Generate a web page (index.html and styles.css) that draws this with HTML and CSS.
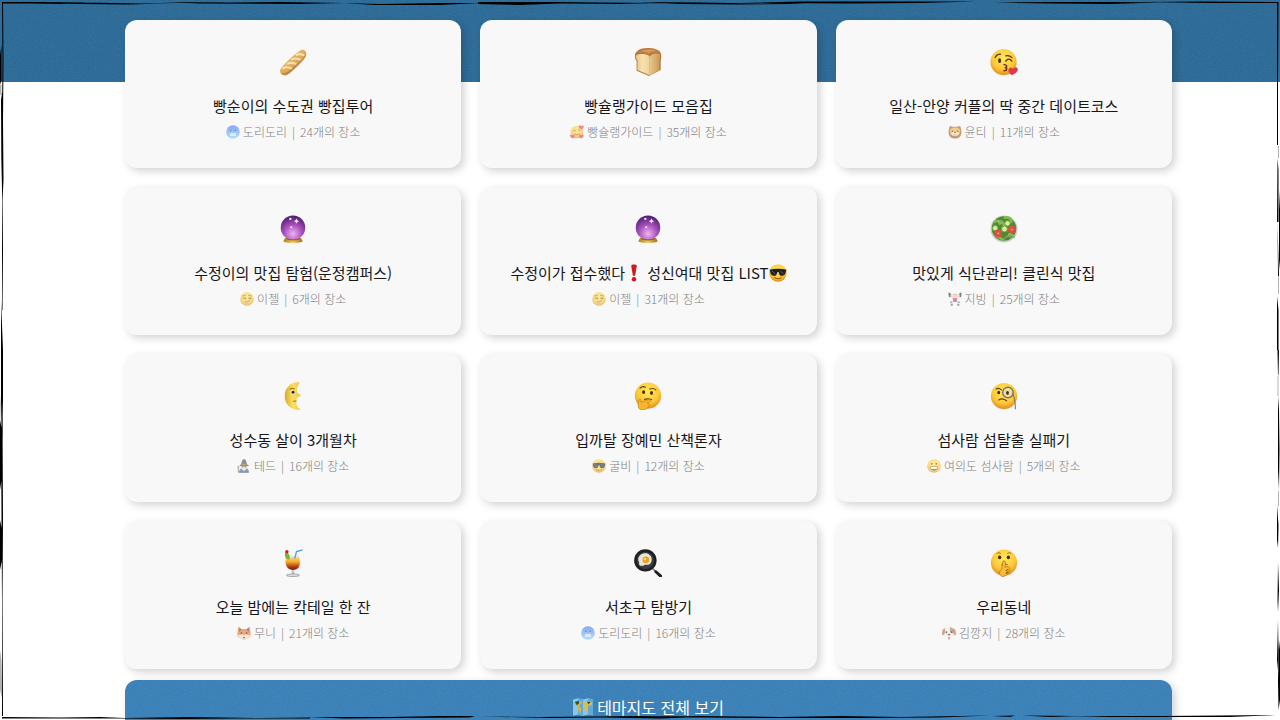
FILE: index.html
```
<!DOCTYPE html>
<html lang="ko">
<head>
    <meta charset="UTF-8">
    <meta name="viewport" content="width=device-width, initial-scale=1.0">
    <title>테마지도</title>
    <link rel="stylesheet" href="styles.css">
</head>
<body>
    <!-- 아이콘 모음 -->
    <svg class="sprite" aria-hidden="true">
        <defs>
            <radialGradient id="gFace" cx="50%" cy="35%" r="65%">
                <stop offset="0" stop-color="#ffe95c"/>
                <stop offset=".65" stop-color="#fdc93a"/>
                <stop offset="1" stop-color="#e38b1c"/>
            </radialGradient>
            <linearGradient id="gCold" x1="0" y1="0" x2="0" y2="1">
                <stop offset="0" stop-color="#3f74ee"/>
                <stop offset="1" stop-color="#7fd0ff"/>
            </linearGradient>
            <radialGradient id="gBall" cx="50%" cy="75%" r="75%">
                <stop offset="0" stop-color="#efb4ee"/>
                <stop offset=".5" stop-color="#a64fbb"/>
                <stop offset="1" stop-color="#4c1a6b"/>
            </radialGradient>
            <linearGradient id="gGold" x1="0" y1="0" x2="1" y2="0">
                <stop offset="0" stop-color="#b47a16"/>
                <stop offset=".5" stop-color="#ecc75c"/>
                <stop offset="1" stop-color="#a36c12"/>
            </linearGradient>
            <linearGradient id="gCrust" x1="0" y1="0" x2="1" y2="1">
                <stop offset="0" stop-color="#f3cf86"/>
                <stop offset=".6" stop-color="#dba558"/>
                <stop offset="1" stop-color="#a86322"/>
            </linearGradient>
            <linearGradient id="gLoaf" x1="0" y1="0" x2="1" y2="0">
                <stop offset="0" stop-color="#e5c689"/>
                <stop offset=".5" stop-color="#f6e3b2"/>
                <stop offset="1" stop-color="#ecd297"/>
            </linearGradient>
            <linearGradient id="gLoafSide" x1="0" y1="0" x2="1" y2="0">
                <stop offset="0" stop-color="#e6c88b"/>
                <stop offset="1" stop-color="#c6995a"/>
            </linearGradient>
            <linearGradient id="gDrink" x1="0" y1="0" x2="0" y2="1">
                <stop offset="0" stop-color="#ffe07a"/>
                <stop offset=".4" stop-color="#f5a524"/>
                <stop offset=".75" stop-color="#b23d12"/>
                <stop offset="1" stop-color="#6e170b"/>
            </linearGradient>
            <linearGradient id="gMoon" x1="0" y1="0" x2="1" y2="0">
                <stop offset="0" stop-color="#d9a82c"/>
                <stop offset=".5" stop-color="#fbdf62"/>
                <stop offset="1" stop-color="#f0c545"/>
            </linearGradient>
        </defs>

        <symbol id="baguette" viewBox="0 0 32 32">
            <path d="M1 26C1 22 22 3 26 2c3-.7 6 2 5 6C30 12 12 30 8 31c-4 .6-7-1.500-7-5z" fill="url(#gCrust)"/>
            <path d="M2 28c3 2 8 0 12-4S30 11 31 6c.6 4-2 7-6 11S12 30 8 31c-3 .5-5-1-6-3z" fill="#a8662a" opacity=".5"/>
            <path d="M5 23c3-2 6-1 9 0M10 18c3-2 6-1 9 0M15 13c3-2 6-1 9 0M20 8c3-2 5-1 8 0" stroke="#ffedba" stroke-width="2.400" fill="none" stroke-linecap="round" opacity=".8"/>
        </symbol>
        <symbol id="bread" viewBox="0 0 32 32">
            <path d="M1 9C1 4 7 0 15 0s15 2 16 7c.5 3 0 5-.5 8v10L17 32 3 26V15C2 13 1 12 1 9z" fill="#b87a3c"/>
            <path d="M2 9c1-3 14-3 16 1v21L4 25V14c-1-1-2-3-2-5z" fill="url(#gLoaf)"/>
            <path d="M18 10c3-4 11-5 12-2 0 3-1 5-1 8v9l-11 6z" fill="url(#gLoafSide)"/>
            <path d="M3 6c4-5 23-6 27 1-5-2-10-1-12 2C14 5 7 5 3 6z" fill="#be7d3e"/>
            <path d="M7 4c6-3 15-3 20 0-5-1-8 0-10 2-3-2-7-2-10-2z" fill="#d79b58"/>
        </symbol>
        <symbol id="kiss" viewBox="0 0 32 32">
            <circle cx="15.500" cy="16" r="15" fill="url(#gFace)"/>
            <ellipse cx="11" cy="14.500" rx="1.700" ry="2.700" fill="#4b2a0a"/>
            <path d="M6 11c1-3 3-4 6-4M18 9c3-1 5 0 7 2M18 15c2-3 5-3 7 0" stroke="#5b3509" stroke-width="1.500" fill="none" stroke-linecap="round"/>
            <path d="M16 19c4 0 4 3 1 3.500 3 .5 3 3.500-1 3.500" stroke="#6a2d0b" stroke-width="1.500" fill="none" stroke-linecap="round"/>
            <path d="M25 31c-4-2-5-6-3-8 2-1.500 4 0 4 1 1-1.500 4-3 5.500-1 1.500 3-2 6-6.500 8z" fill="#e33a4a"/>
        </symbol>
        <symbol id="crystal" viewBox="0 0 32 32">
            <path d="M7 26h18l2 4c-2 2.500-20 2.500-22 0z" fill="url(#gGold)"/>
            <circle cx="16" cy="14.500" r="14" fill="url(#gBall)"/>
            <path d="M8 27c4 2 12 2 16 0" stroke="#7d5110" fill="none"/>
            <path d="M20 4l1 2 2 1-2 1-1 2-1-2-2-1 2-1z" fill="#fff" opacity=".9"/>
            <circle cx="13" cy="4.500" r="1.300" fill="#fff"/>
            <circle cx="14" cy="14" r="1.200" fill="#fff" opacity=".9"/>
        </symbol>
        <symbol id="salad" viewBox="0 0 32 32">
            <circle cx="16" cy="16" r="15.500" fill="#c9ccd0"/>
            <circle cx="16" cy="15.500" r="14" fill="#4e8a34"/>
            <path d="M5 8c4-3 6-1 6 2M17 3c5-1 8 2 7 5M7 24c3 0 4 3 8 4M22 22c3 0 5 2 5 3M13 9c3 0 4 2 3 4" stroke="#7fbd4c" stroke-width="3" fill="none" stroke-linecap="round"/>
            <path d="M9 9c1-3 5-3 6-1M17 27c1-4 6-4 7-1" stroke="#c9b5b4" fill="none"/>
            <g fill="#d9efa0" stroke="#6fa33a"><circle cx="6" cy="15" r="3"/><circle cx="16.500" cy="16" r="3.300"/><circle cx="20" cy="9.500" r="3"/></g>
            <g fill="#d8523c"><circle cx="9.500" cy="21" r="4.400"/><circle cx="25" cy="16.500" r="4.400"/></g>
            <circle cx="9.500" cy="21" r="1.200" fill="#f0927a"/><circle cx="25" cy="16.500" r="1.200" fill="#f0927a"/>
        </symbol>
        <symbol id="moon" viewBox="0 0 32 32">
            <path d="M24 .5C14-1 6.500 6 6.500 16S14 33 25 31.500c-4-2-5.500-5-5-9l-.5-1.500 1-1-1-1c1 0 2-1 1.500-2l3-.5c1 0 1-1 .5-1.500l-3.500-3C20 8 21 4 24 .5z" fill="url(#gMoon)"/>
            <ellipse cx="15.500" cy="11.500" rx="2.400" ry="2" fill="#fff"/><circle cx="16" cy="11.700" r="1.700" fill="#1d2740"/>
            <path d="M12 8.500c2-1.500 4-1.500 6-.5M16 21.500c1 .7 2 .7 4 0" stroke="#a8781a" stroke-width="1.200" fill="none"/>
        </symbol>
        <symbol id="thinking" viewBox="0 0 32 32">
            <circle cx="16" cy="15.500" r="15" fill="url(#gFace)"/>
            <g fill="#4b2a0a"><ellipse cx="11" cy="11.500" rx="1.700" ry="2.200"/><ellipse cx="20" cy="12.500" rx="1.700" ry="2.200"/></g>
            <path d="M7 7c2-2 4-2 6-1M18 8c3-1 5-1 7 1M12 20c2-1 4-1 8 0" stroke="#6a3f0c" stroke-width="1.400" fill="none" stroke-linecap="round"/>
            <path d="M6 20c1-1 2 0 2 3l9-3c3-.5 3 2 1 2.500L15 24c3 0 3 4 1 5-2 2-5 3.500-8 3-4-1-4-9-2-12z" fill="#f7b52f" stroke="#c67a14" stroke-width=".8"/>
        </symbol>
        <symbol id="monocle" viewBox="0 0 32 32">
            <circle cx="16" cy="16" r="15" fill="url(#gFace)"/>
            <circle cx="20.500" cy="12" r="6" fill="#f2dfa0" stroke="#77736a" stroke-width="1.600"/>
            <g fill="#4b2a0a"><ellipse cx="10" cy="12" rx="1.600" ry="2.100"/><ellipse cx="20" cy="12.500" rx="1.600" ry="2.100"/></g>
            <path d="M7 8c2-1 4-1 6 1M10 20.500c3-2 7-1 9 1" stroke="#6a3f0c" stroke-width="1.400" fill="none" stroke-linecap="round"/>
            <path d="M26 13c2 5 3 10 3 18" stroke="#77736a" stroke-width="1.200" fill="none"/>
        </symbol>
        <symbol id="cocktail" viewBox="0 0 32 32">
            <path d="M8 7h15c3 9 2 16-7 17C6 23 6 15 8 7z" fill="#e9ecec"/>
            <path d="M8 9h15c2 8 1 14-7 15-9-1-9-8-8-15z" fill="url(#gDrink)"/>
            <path d="M18 11l2-8 7-2" stroke="#4ba3dd" stroke-width="1.500" fill="none"/>
            <path d="M7 4c4 0 6 3 5 8-4 0-6-3-5-8z" fill="#7cb335"/>
            <circle cx="9" cy="3" r="2" fill="#c81f2d"/>
            <path d="M15 24h2l1 5h-4z" fill="#bfc3c4"/>
            <ellipse cx="16" cy="30" rx="7.500" ry="1.500" fill="#ddd" stroke="#8a8c8c" stroke-width=".8"/>
        </symbol>
        <symbol id="pan" viewBox="0 0 32 32">
            <path d="M21 22l4 4" stroke="#77797c" stroke-width="2"/>
            <path d="M25 26l6 5.500" stroke="#1d1e20" stroke-width="3.400" stroke-linecap="round"/>
            <circle cx="13" cy="13" r="12.800" fill="#1d1e20"/>
            <circle cx="13" cy="13" r="10" fill="#3a3c3e"/>
            <path d="M7 7c3-3 9-3 11 0 3 2 3 8 0 10-2 2-5 0-7 2-4 1-6-1-5-4-2-3-1-6 1-8z" fill="#e9e7dc"/>
            <circle cx="13.500" cy="12.500" r="3.800" fill="#ee9f22"/>
            <circle cx="12.500" cy="11.500" r="1.500" fill="#ffd56a"/>
        </symbol>
        <symbol id="shush" viewBox="0 0 32 32">
            <circle cx="16" cy="15.500" r="15" fill="url(#gFace)"/>
            <g fill="#4b2a0a"><ellipse cx="11" cy="9.500" rx="1.900" ry="2.200"/><ellipse cx="21" cy="9.500" rx="1.900" ry="2.200"/></g>
            <path d="M8 5c1-1 3-1 4 0M20 5c1-1 3-1 4 0M13 18c1-1 5-1 7 0" stroke="#9a5c10" fill="none" stroke-linecap="round"/>
            <path d="M14.500 15c0-2 3-2 3 0v6c4-2 6 0 5 3-1 4-4 7-8 7.500-4-1-5-6-1-8.500z" fill="#f9bd37" stroke="#b86f12" stroke-width=".9"/>
            <path d="M18 25l3-2M18 28l3-2" stroke="#8f4d0b" stroke-width="1.200"/>
        </symbol>

        <symbol id="cold" viewBox="0 0 32 32">
            <circle cx="16" cy="16" r="15.500" fill="url(#gCold)"/>
            <g fill="#123a7a"><circle cx="11" cy="12" r="1.900"/><circle cx="21" cy="12" r="1.900"/></g>
            <rect x="9" y="18" width="14" height="7" rx="3" fill="#e9f3ff"/>
            <path d="M9 21.500h14M13 18v7M16 18v7M19 18v7" stroke="#9dc3ea" stroke-width=".8"/>
        </symbol>
        <symbol id="hearts" viewBox="0 0 32 32">
            <circle cx="16" cy="16" r="14.500" fill="url(#gFace)"/>
            <path d="M8 14c1-3 4-3 5 0M18 13c1-3 4-3 5 0M11 20c3 4 8 3 10-1" stroke="#6a3509" stroke-width="1.600" fill="none"/>
            <g fill="#f0384e"><path id="heartShape" d="M6 31c-6-3-7-7-5-9 2-1 4 0 5 2 1-2 4-3 5-1 1 3-1 6-5 8z"/><use href="#heartShape" x="20"/><use href="#heartShape" x="20" y="-21"/></g>
        </symbol>
        <symbol id="pom" viewBox="0 0 32 32">
            <path d="M4 2l7 2h10l7-2 2 9c3 12-4 20-14 20S-1 23 2 11z" fill="#a85a22"/>
            <path d="M5 10c4-6 18-6 22 0 3 8-2 15-11 15S2 18 5 10z" fill="#f2a93c"/>
            <ellipse cx="16" cy="20" rx="8" ry="4" fill="#fff3dd"/>
            <g fill="#2b1b10"><circle cx="10" cy="14" r="1.700"/><circle cx="22" cy="14" r="1.700"/><path d="M13 16h6l-3 3z"/></g>
            <path d="M12 21c2 2 6 2 8 0" stroke="#2b1b10" fill="none"/>
        </symbol>
        <symbol id="smirk" viewBox="0 0 32 32">
            <circle cx="16" cy="16" r="15.500" fill="url(#gFace)"/>
            <path d="M7 9l5-1M20 8l5 1M7 14h6M19 14h6M12 22c4 2 7 1 10-3" stroke="#5b3509" stroke-width="1.500" fill="none" stroke-linecap="round"/>
            <circle cx="12" cy="15" r="1.300" fill="#4b2a0a"/><circle cx="24" cy="15" r="1.300" fill="#4b2a0a"/>
        </symbol>
        <symbol id="lifter" viewBox="0 0 32 32">
            <path d="M2 6h28" stroke="#999"/>
            <path d="M1 1l5 2v8l-4 1zM31 1l-5 2v8l4 1z" fill="#1f2b36"/>
            <path d="M6 7l6 8h8l6-8" stroke="#edb99a" stroke-width="3" fill="none"/>
            <circle cx="16" cy="9" r="4.500" fill="#eec39f"/><path d="M11 8c0-6 10-6 10 0z" fill="#d9c09b"/>
            <path d="M11 14h10l-1 9h-8z" fill="#b93b72"/>
            <path d="M12 22l-5 2 3 5M20 22l5 2-3 5" stroke="#edb99a" stroke-width="3" fill="none"/>
            <path d="M5 31h6v-3H7zM21 31h6l-2-3h-4z" fill="#2a3a5c"/>
            <circle cx="7" cy="23" r="2" fill="#3f74b8"/><circle cx="25" cy="23" r="2" fill="#3f74b8"/>
        </symbol>
        <symbol id="mage" viewBox="0 0 32 32">
            <path d="M5 30c0-8 5-10 11-10s11 2 11 10z" fill="#3d6787"/>
            <path d="M9 13h14v8c-2 5-12 5-14 0z" fill="#edc493"/>
            <path d="M11 22c2-2 8-2 10 0l-5 6z" fill="#e5ded0"/>
            <path d="M5 15c4-2 5-4 7-13l6-2 3 5c1 5 2 8 7 10-6 3-17 3-23 0z" fill="#4a4a50"/>
            <path d="M11 10c4 2 7 2 11 0v3c-4 1-8 1-12 0z" fill="#8b6f4c"/>
            <path d="M3 31V18" stroke="#7d5a31" stroke-width="2"/><circle cx="3" cy="18" r="2.500" fill="#59b26a"/>
            <path d="M4 30h23" stroke="#2c4f97" stroke-width="3"/>
            <circle cx="13" cy="18" r="1" fill="#333"/><circle cx="19" cy="18" r="1" fill="#333"/>
        </symbol>
        <symbol id="cool" viewBox="0 0 32 32">
            <circle cx="16" cy="16" r="15.500" fill="url(#gFace)"/>
            <path d="M1 10c10-2 20-2 30 0l-1 3c-1 6-3 8-7 8s-5-3-6-7h-2c-1 4-2 7-6 7s-6-2-7-8z" fill="#1c1f24"/>
            <path d="M5 12l6 6M20 12l6 6" stroke="#687079" stroke-width="1.500"/>
            <path d="M10 24c4 3 9 3 12 0" stroke="#7a430b" stroke-width="1.600" fill="none" stroke-linecap="round"/>
        </symbol>
        <symbol id="grin" viewBox="0 0 32 32">
            <circle cx="16" cy="16" r="15.500" fill="url(#gFace)"/>
            <g fill="#4b2a0a"><circle cx="11" cy="11" r="1.900"/><circle cx="21" cy="11" r="1.900"/></g>
            <path d="M7 17h18c0 6-4 9-9 9s-9-3-9-9z" fill="#7a4218"/>
            <path d="M8 18h16c-1 4-2 5-8 5s-7-1-8-5z" fill="#fff"/>
        </symbol>
        <symbol id="fox" viewBox="0 0 32 32">
            <path d="M3 1l7 6h12l7-6 2 15v8l-9 5-6 3-6-3-9-5v-8z" fill="#e4742c"/>
            <path d="M5 4l5 4-5 6zM27 4l-5 4 5 6z" fill="#6d3320"/>
            <path d="M1 22c5-3 10-2 12-4l3 5 3-5c2 2 7 1 12 4l-9 7-6 3-6-3z" fill="#f6e4cf"/>
            <g fill="#26170f"><ellipse cx="10" cy="16" rx="1.700" ry="2.200"/><ellipse cx="22" cy="16" rx="1.700" ry="2.200"/><path d="M13 25h6l-3 4z"/></g>
        </symbol>
        <symbol id="dog" viewBox="0 0 32 32">
            <path d="M6 6c5-6 15-6 20 0 4 7 3 20-10 22C3 26 2 13 6 6z" fill="#f1ede6"/>
            <path d="M18 3c5 0 9 4 9 10-2 5-8 4-9-1z" fill="#b27a45"/>
            <path d="M7 5C1 5-1 14 1 21c4 1 5-4 6-8zM25 5c6 0 8 9 6 16-4 1-5-4-6-8z" fill="#a86f3e"/>
            <g fill="#20150f"><circle cx="10" cy="14" r="2"/><circle cx="22" cy="14" r="2"/><path d="M13 18h6c0 2-1 3-3 3s-3-1-3-3z"/></g>
            <path d="M14 25h4v4c-1 3-3 3-4 0z" fill="#e84b62"/>
        </symbol>
        <symbol id="bang" viewBox="0 0 32 32">
            <path d="M11 3c1-3 9-3 10 0l-3 18h-4z" fill="#d3171e"/>
            <circle cx="16" cy="27" r="4" fill="#d3171e"/>
        </symbol>
        <symbol id="map" viewBox="0 0 32 32">
            <path d="M0 4l8-2 8 2 8-2 8 2v25l-8-1-8 2-8-2-8 2z" fill="#8ac6ea"/>
            <path d="M8 2l8 2v26l-8-2zM24 2l8 2v25l-8-1z" fill="#62aad8"/>
            <path d="M3 8l8-2 4 3-4 3-1 3 4 4-3 8-3-8-1-4-4-3z" fill="#cfb84a"/>
            <path d="M17 10l6-4 8 3-2 5-4-1-3 3 1 6-2 4-2-7-3-4z" fill="#d8c056"/>
            <path d="M3 8l6-2 1 4-4 3zM22 7l6 1-3 4z" fill="#35522f"/>
        </symbol>
    </svg>

    <header class="hero"></header>

    <main class="container">
        <div class="themes">
            <a class="card" href="#">
                <svg class="icon"><use href="#baguette"/></svg>
                <h3 class="title">빵순이의 수도권 빵집투어</h3>
                <p class="info"><svg class="face"><use href="#cold"/></svg>도리도리<span class="bar">|</span>24개의 장소</p>
            </a>
            <a class="card" href="#">
                <svg class="icon"><use href="#bread"/></svg>
                <h3 class="title">빵슐랭가이드 모음집</h3>
                <p class="info"><svg class="face"><use href="#hearts"/></svg>빵슐랭가이드<span class="bar">|</span>35개의 장소</p>
            </a>
            <a class="card" href="#">
                <svg class="icon"><use href="#kiss"/></svg>
                <h3 class="title">일산-안양 커플의 딱 중간 데이트코스</h3>
                <p class="info"><svg class="face"><use href="#pom"/></svg>윤티<span class="bar">|</span>11개의 장소</p>
            </a>
            <a class="card" href="#">
                <svg class="icon"><use href="#crystal"/></svg>
                <h3 class="title">수정이의 맛집 탐험(운정캠퍼스)</h3>
                <p class="info"><svg class="face"><use href="#smirk"/></svg>이젤<span class="bar">|</span>6개의 장소</p>
            </a>
            <a class="card" href="#">
                <svg class="icon"><use href="#crystal"/></svg>
                <h3 class="title">수정이가 접수했다<svg class="emoji"><use href="#bang"/></svg> 성신여대 맛집 LIST<svg class="emoji"><use href="#cool"/></svg></h3>
                <p class="info"><svg class="face"><use href="#smirk"/></svg>이젤<span class="bar">|</span>31개의 장소</p>
            </a>
            <a class="card" href="#">
                <svg class="icon"><use href="#salad"/></svg>
                <h3 class="title">맛있게 식단관리! 클린식 맛집</h3>
                <p class="info"><svg class="face"><use href="#lifter"/></svg>지빙<span class="bar">|</span>25개의 장소</p>
            </a>
            <a class="card" href="#">
                <svg class="icon"><use href="#moon"/></svg>
                <h3 class="title">성수동 살이 3개월차</h3>
                <p class="info"><svg class="face"><use href="#mage"/></svg>테드<span class="bar">|</span>16개의 장소</p>
            </a>
            <a class="card" href="#">
                <svg class="icon"><use href="#thinking"/></svg>
                <h3 class="title">입까탈 장예민 산책론자</h3>
                <p class="info"><svg class="face"><use href="#cool"/></svg>굴비<span class="bar">|</span>12개의 장소</p>
            </a>
            <a class="card" href="#">
                <svg class="icon"><use href="#monocle"/></svg>
                <h3 class="title">섬사람 섬탈출 실패기</h3>
                <p class="info"><svg class="face"><use href="#grin"/></svg>여의도 섬사람<span class="bar">|</span>5개의 장소</p>
            </a>
            <a class="card" href="#">
                <svg class="icon"><use href="#cocktail"/></svg>
                <h3 class="title">오늘 밤에는 칵테일 한 잔</h3>
                <p class="info"><svg class="face"><use href="#fox"/></svg>무니<span class="bar">|</span>21개의 장소</p>
            </a>
            <a class="card" href="#">
                <svg class="icon"><use href="#pan"/></svg>
                <h3 class="title">서초구 탐방기</h3>
                <p class="info"><svg class="face"><use href="#cold"/></svg>도리도리<span class="bar">|</span>16개의 장소</p>
            </a>
            <a class="card" href="#">
                <svg class="icon"><use href="#shush"/></svg>
                <h3 class="title">우리동네</h3>
                <p class="info"><svg class="face"><use href="#dog"/></svg>김깡지<span class="bar">|</span>28개의 장소</p>
            </a>
        </div>
        <button type="button" class="btn"><svg class="map"><use href="#map"/></svg>테마지도 전체 보기</button>
    </main>

    <!-- 손그림 테두리 -->
    <svg class="frame" viewBox="0 0 1280 720" preserveAspectRatio="none" aria-hidden="true">
        <path d="M2 2L40 2 86 2.500 60 4 30 3.500 2 3.500zM36 3L84 2.500 140 3.500 175 3 130 4.500 80 4zM160 2L230 2.500 280 2 345 3 300 4 200 3.500zM340 3L380 4 440 3 480 3 440 5 376 5zM478 2L560 2 600 2.500 660 3 620 4 560 3.500 520 5 478 4zM640 2L700 2.500 760 3.500 830 2 790 4 740 4.500 680 4zM740 3L800 1.500 900 1.500 976 1.500 920 3 850 3.500zM994 2.500L1060 2 1120 2 1160 2.500 1110 4 1050 3.500zM1140 2L1200 1.500 1278 2 1278 3 1210 3z"/>
        <path d="M2 2L3 2 3.500 60 3 120 3.500 180 2.500 200 3 250 2.500 310 2 310 2 180 2 120 2.500 60zM0 55L1.500 45 1.500 80 0 85zM1 100L2.500 90 2.500 125 1.500 190zM1 300L3 350 3 400 2 440 1 400zM0 420L2 430 1.500 480 0 490zM1 430L2.500 420 3 520 2.500 600 3 716 2 716 2 600zM0 520L2 530 2 560 0 570z"/>
        <path d="M0 85h1.500v10H0zM0 395L3 420 3 440 1 430zM0 650L1.500 660 2.500 700 0 690zM1278 146h1v12h-1zM1278 276h1v18h-1zM1277.500 376h1v20h-1zM1278 491h1v15h-1z" opacity=".3"/>
        <path d="M1277 2L1278.500 2 1278 80 1278 145 1277 145zM1277.500 158L1278.500 170 1278.500 222 1277 222zM1280 190L1279 210 1279 260 1280 270zM1277.500 222L1278.500 260 1279 276 1278 276zM1277 296L1278.500 310 1278.500 350 1277 350zM1277.500 350L1279 350 1278.500 374 1278 376zM1278 396L1279 410 1279.500 450 1279 490 1278 470zM1277 505L1278.500 525 1278 548 1277 540zM1278 562L1279 590 1278 612 1277.500 600zM1278 620L1278.500 650 1278 670 1277 660zM1279 640L1280 650 1280 700 1278.500 710 1278 680z"/>
        <path d="M2 717L60 717.500 100 717 125 718 190 717 260 718 310 717.500 310 718.500 240 718.500 180 719 120 718.500 60 718.500 2 718.500zM308 717L390 717 440 716 475 716 470 717.500 400 718 345 718.500zM480 716.500L540 717 640 716 700 717 660 718.500 600 717.500 550 718zM640 717L700 716 780 717 840 716 900 717 990 715.500 940 717.500 860 718 760 718zM992 716L1015 715.500 1010 717zM1022 715.500L1080 716 1050 717zM1070 716L1160 716 1220 715.500 1276 715 1230 717 1180 717 1110 717z"/>
    </svg>
</body>
</html>
```
FILE: styles.css
```
* {
    box-sizing: border-box;
}
body {
    margin: 0;
    background: #fff;
    color: #16161a;
    font-family: "Noto Sans CJK KR", "Noto Sans", sans-serif;
}
.sprite {
    position: absolute;
    width: 0;
    height: 0;
}
.hero,
.btn {
    background-image: url("data:image/svg+xml,%3Csvg xmlns='http://www.w3.org/2000/svg' width='200' height='200'%3E%3Cfilter id='n'%3E%3CfeTurbulence type='fractalNoise' baseFrequency='.6' numOctaves='2' stitchTiles='stitch'/%3E%3CfeColorMatrix type='saturate' values='0'/%3E%3C/filter%3E%3Crect width='200' height='200' filter='url(%23n)' opacity='.12'/%3E%3C/svg%3E");
}
.hero {
    height: 82px;
    background-color: #266796;
}
.container {
    margin-top: -62px;
    padding: 0 108px 0 125px;
}
.themes {
    display: grid;
    grid-template-columns: repeat(3, 1fr);
    gap: 19px;
}
.card {
    display: flex;
    flex-direction: column;
    align-items: center;
    padding: 28px 12px 26px;
    border-radius: 12px;
    background: #f8f8f8;
    box-shadow: 3px 3px 8px rgba(0, 0, 0, 0.18);
    color: inherit;
    text-decoration: none;
}
.icon {
    width: 28px;
    height: 28px;
    margin-bottom: 18px;
}
.title {
    display: flex;
    align-items: center;
    margin: 0 0 4px;
    font-size: 15px;
    font-weight: 400;
    line-height: 24px;
    white-space: pre;
}
.emoji {
    width: 18px;
    height: 18px;
}
.info {
    display: flex;
    align-items: center;
    margin: 0;
    color: #808080;
    font-size: 12px;
    font-weight: 300;
    line-height: 20px;
}
.face {
    width: 14px;
    height: 14px;
    margin-right: 3px;
    opacity: 0.6;
}
.bar {
    margin: 0 5px;
}
.btn {
    display: flex;
    align-items: center;
    justify-content: center;
    width: 100%;
    height: 54px;
    margin-top: 11px;
    border: none;
    border-radius: 12px;
    background-color: #347eb8;
    box-shadow: 3px 3px 8px rgba(0, 0, 0, 0.18);
    color: #fff;
    font-family: inherit;
    font-size: 16px;
    font-weight: 400;
    cursor: pointer;
}
.map {
    width: 20px;
    height: 20px;
    margin-right: 4px;
}
.frame {
    position: fixed;
    top: 0;
    left: 0;
    width: 100%;
    height: 100%;
    pointer-events: none;
}
```
